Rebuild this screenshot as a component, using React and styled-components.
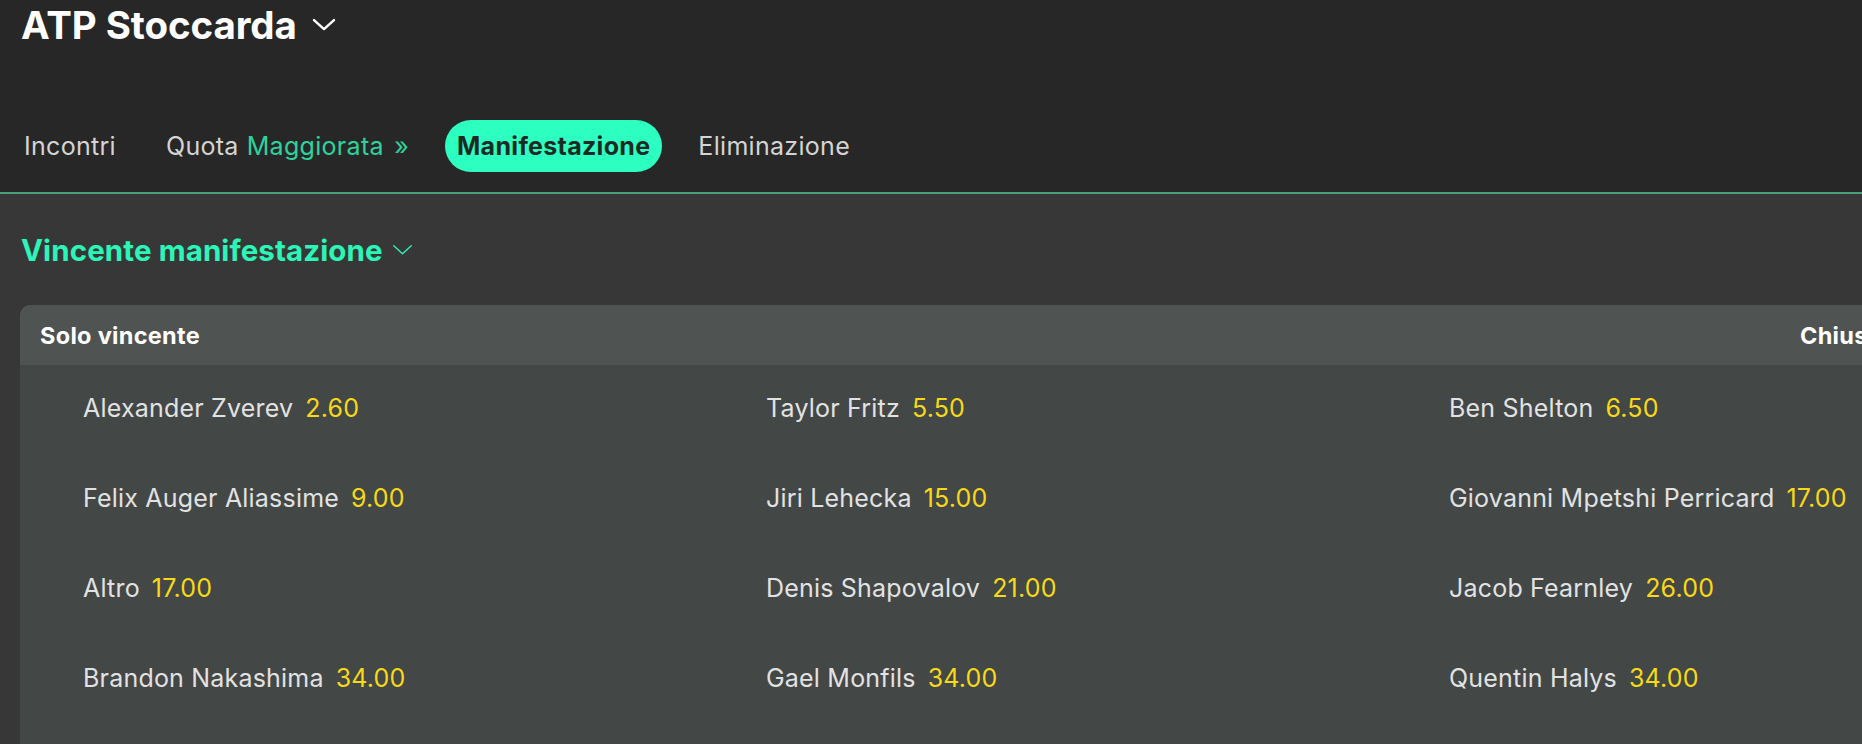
import styled, { createGlobalStyle } from 'styled-components';

const GlobalStyle = createGlobalStyle`
  html, body {
    margin: 0;
    padding: 0;
    overflow: hidden;
    background: #373737;
    font-family: Inter, 'Noto Sans', sans-serif;
    -webkit-font-smoothing: antialiased;
  }
`;

const Page = styled.div`
  width: 1862px;
  height: 744px;
  overflow: hidden;
  background: #373737;
`;

const TopBar = styled.header`
  background: #272727;
  border-bottom: 2px solid #4a9e78;
  padding: 2px 0 20px 21px;
`;

const TitleRow = styled.div`
  display: flex;
  align-items: center;
  gap: 15px;
  height: 46px;
`;

const Title = styled.h1`
  margin: 0;
  font-size: 38.5px;
  line-height: 46px;
  font-weight: 700;
  color: #ffffff;
  letter-spacing: -0.1px;
`;

const Tabs = styled.nav`
  display: flex;
  align-items: center;
  gap: 24px;
  margin: 72px 0 0 -10px;
`;

const Tab = styled.button`
  display: flex;
  align-items: center;
  height: 52px;
  padding: 0 ${(p) => (p.$active ? '12px' : '13px')};
  margin: 0 ${(p) => (p.$active ? '-1px' : '0')};
  border: none;
  border-radius: 26px;
  background: ${(p) => (p.$active ? '#2cffc0' : 'transparent')};
  color: ${(p) => (p.$active ? '#1d2924' : '#d4d4d4')};
  font-family: inherit;
  font-size: 25px;
  font-weight: ${(p) => (p.$active ? 700 : 400)};
  letter-spacing: 0.3px;
  cursor: pointer;
  white-space: nowrap;
`;

const Highlight = styled.span`
  color: #2ed39c;
  margin-left: 8px;
  word-spacing: 3px;
`;

const Content = styled.main`
  padding: 40px 0 0 20px;
`;

const SectionTitle = styled.h2`
  display: flex;
  align-items: center;
  gap: 9px;
  margin: 0 0 39px 1px;
  font-size: 29.5px;
  line-height: 32px;
  font-weight: 700;
  color: #2cf5b8;
  letter-spacing: 0.1px;
`;

const Card = styled.section`
  width: 2049px;
  border-radius: 10px;
  overflow: hidden;
  background: #434746;
  padding-bottom: 60px;
`;

const CardHeader = styled.div`
  display: flex;
  align-items: center;
  justify-content: space-between;
  height: 60px;
  padding: 0 20px;
  background: #4f5352;
  color: #ffffff;
  font-size: 23.5px;
  font-weight: 700;
  letter-spacing: 0.3px;
`;

const HeaderLabel = styled.span`
  white-space: nowrap;
`;

const CloseLabel = styled.span`
  width: 249px;
  white-space: nowrap;
`;

const Grid = styled.div`
  display: grid;
  grid-template-columns: repeat(3, 683px);
  grid-auto-rows: 90px;
`;

const Selection = styled.div`
  display: flex;
  align-items: center;
  gap: 12px;
  padding: 0 0 4px 63px;
  font-size: 25px;
  letter-spacing: 0.2px;
  white-space: nowrap;
`;

const Name = styled.span`
  color: #e2e2e2;
`;

const Odds = styled.span`
  color: #f7d917;
`;

const Chevron = ({ size = 24, color = '#fff', stroke = 2 }) => (
  <svg width={size} height={size * 0.55} viewBox="0 0 24 13" fill="none">
    <polyline
      points="2,2 12,11 22,2"
      stroke={color}
      strokeWidth={stroke}
      strokeLinecap="round"
      strokeLinejoin="round"
    />
  </svg>
);

const tabs = [
  { label: 'Incontri' },
  { label: 'Quota', extra: 'Maggiorata »' },
  { label: 'Manifestazione', active: true },
  { label: 'Eliminazione' },
];

const selections = [
  ['Alexander Zverev', '2.60'],
  ['Taylor Fritz', '5.50'],
  ['Ben Shelton', '6.50'],
  ['Felix Auger Aliassime', '9.00'],
  ['Jiri Lehecka', '15.00'],
  ['Giovanni Mpetshi Perricard', '17.00'],
  ['Altro', '17.00'],
  ['Denis Shapovalov', '21.00'],
  ['Jacob Fearnley', '26.00'],
  ['Brandon Nakashima', '34.00'],
  ['Gael Monfils', '34.00'],
  ['Quentin Halys', '34.00'],
];

export default function App() {
  return (
    <Page>
      <GlobalStyle />
      <TopBar>
        <TitleRow>
          <Title>ATP Stoccarda</Title>
          <Chevron size={24} color="#ffffff" stroke={2.4} />
        </TitleRow>
        <Tabs>
          {tabs.map((t) => (
            <Tab key={t.label} $active={t.active}>
              {t.label}
              {t.extra && <Highlight>{t.extra}</Highlight>}
            </Tab>
          ))}
        </Tabs>
      </TopBar>
      <Content>
        <SectionTitle>
          Vincente manifestazione
          <Chevron size={21} color="#2cf5b8" stroke={1.6} />
        </SectionTitle>
        <Card>
          <CardHeader>
            <HeaderLabel>Solo vincente</HeaderLabel>
            <CloseLabel>Chiusura scommesse</CloseLabel>
          </CardHeader>
          <Grid>
            {selections.map(([name, odds]) => (
              <Selection key={name}>
                <Name>{name}</Name>
                <Odds>{odds}</Odds>
              </Selection>
            ))}
          </Grid>
        </Card>
      </Content>
    </Page>
  );
}
